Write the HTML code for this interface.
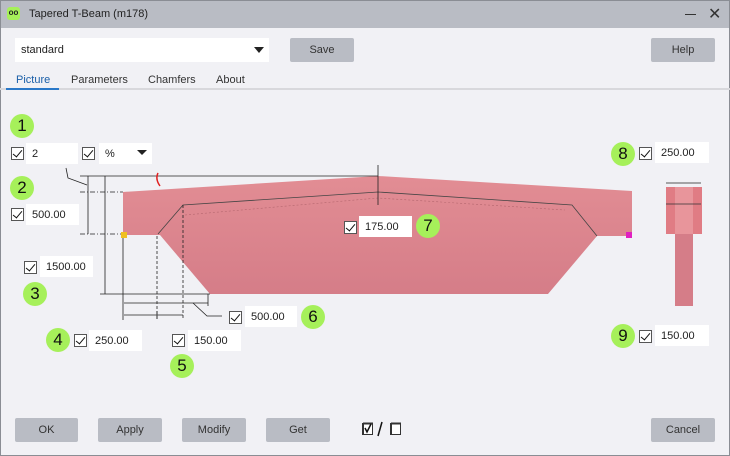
<!DOCTYPE html>
<html><head><meta charset="utf-8"><style>
*{margin:0;padding:0;box-sizing:border-box}
body{width:730px;height:456px;overflow:hidden;background:#f1f1f5;font-family:"Liberation Sans",sans-serif;font-size:11px;color:#222;position:relative}
.a{position:absolute}
.win{left:0;top:0;width:730px;height:456px;border:1px solid #8a8d94}
.title{left:1px;top:1px;width:728px;height:27px;background:#b9bcc4}
.inp{position:absolute;background:#fff;height:21px;padding:5px 0 0 6px;font-size:11px}
.cb{position:absolute;width:13px;height:13px;border:1px solid #555;background:#fff}
.cb:after{content:"";position:absolute;left:3px;top:0px;width:4px;height:8px;border:solid #111;border-width:0 1.7px 1.7px 0;transform:rotate(40deg)}
.btn{position:absolute;background:#b9bcc4;border-radius:2px;height:24px;text-align:center;line-height:24px;font-size:11px;color:#333}
.num{position:absolute;width:24px;height:24px;border-radius:50%;background:#a6f05a;text-align:center;line-height:24px;font-size:17px;color:#111}
.tab{position:absolute;top:74px;font-size:11px;color:#333}
</style></head><body>
<div class="a win"></div>
<div class="a title"></div>
<div class="a" style="left:7px;top:7px;width:13px;height:13px;background:#a6f05a;border-radius:3px;font-size:8px;line-height:12px;text-align:center;font-weight:bold">oo</div>
<div class="a" style="left:29px;top:8px;font-size:11px;color:#222">Tapered T-Beam (m178)</div>
<div class="a" style="left:685px;top:14px;width:11px;height:1px;background:#333"></div>
<div class="a" style="left:708px;top:4px;font-size:16px;color:#333">✕</div>

<div class="inp" style="left:15px;top:38px;width:254px;height:24px;padding-top:6px">standard</div>
<div class="a" style="left:254px;top:47px;border-left:5px solid transparent;border-right:5px solid transparent;border-top:6px solid #222"></div>
<div class="btn" style="left:290px;top:38px;width:64px">Save</div>
<div class="btn" style="left:651px;top:38px;width:64px">Help</div>

<div class="tab" style="left:16px;color:#1a5fa8">Picture</div>
<div class="tab" style="left:71px">Parameters</div>
<div class="tab" style="left:148px">Chamfers</div>
<div class="tab" style="left:216px">About</div>
<div class="a" style="left:0;top:88px;width:730px;height:2px;background:#d8d8dc"></div>
<div class="a" style="left:6px;top:88px;width:53px;height:2px;background:#2a78c8"></div>

<svg class="a" style="left:0;top:0" width="730" height="456">
<defs><linearGradient id="g" x1="0" y1="0" x2="0" y2="1"><stop offset="0" stop-color="#e28d94"/><stop offset="1" stop-color="#d57d88"/></linearGradient></defs>
<polygon points="123,192 378,176 632,191 632,236 597,236 548,294 210,294 160,235 123,235" fill="url(#g)"/>
<polyline points="158,234 183,205 378,192 572,205 597,236" fill="none" stroke="#444" stroke-width="0.8"/>
<polyline points="185,215 378,198 565,210" fill="none" stroke="#b5676f" stroke-width="0.6" stroke-dasharray="2,2"/>
<g stroke="#222" stroke-width="0.8" fill="none">
<line x1="80" y1="176" x2="378" y2="176"/>
<line x1="378" y1="165" x2="378" y2="205"/>
<line x1="88" y1="176" x2="88" y2="234"/>
<line x1="105" y1="176" x2="105" y2="294"/>
<line x1="80" y1="192" x2="123" y2="192" stroke-dasharray="5,2,1,2"/>
<line x1="80" y1="234" x2="123" y2="234" stroke-dasharray="5,2,1,2"/>
<line x1="100" y1="294" x2="210" y2="294"/>
<line x1="123" y1="236" x2="123" y2="320"/>
<line x1="157" y1="236" x2="157" y2="320" stroke-dasharray="3,2"/>
<line x1="183" y1="205" x2="183" y2="320" stroke-dasharray="3,2"/>
<line x1="208" y1="294" x2="208" y2="306"/>
<line x1="124" y1="303" x2="208" y2="303"/>
<line x1="124" y1="315" x2="183" y2="315"/>
<line x1="157" y1="311" x2="157" y2="319"/>
<polyline points="193,303 207,316 222,316"/>
<polyline points="66,168 68,178 87,185"/>
<line x1="666" y1="183" x2="701" y2="183"/>
</g>
<path d="M158,173 Q155,179 160,186" stroke="#e02020" stroke-width="1.5" fill="none"/>
<rect x="121" y="232" width="6" height="6" fill="#f0c020"/>
<rect x="626" y="232" width="6" height="6" fill="#e020c0"/>
<rect x="666" y="187" width="36" height="47" fill="#e07c84"/>
<rect x="675" y="187" width="18" height="47" fill="#e8959b"/>
<rect x="675" y="234" width="18" height="72" fill="#d57d88"/>
<line x1="666" y1="204" x2="701" y2="204" stroke="#333" stroke-width="0.8"/>
<rect x="362.5" y="423.5" width="10" height="11" fill="#fff" stroke="#333"/>
<line x1="363" y1="423.5" x2="373" y2="423.5" stroke="#333" stroke-width="2"/>
<line x1="363" y1="423" x2="363" y2="435" stroke="#333" stroke-width="2"/>
<polyline points="365,428 367,432 371,424" fill="none" stroke="#111" stroke-width="1.5"/>
<line x1="378" y1="436" x2="382" y2="422" stroke="#111" stroke-width="1.5"/>
<rect x="390.5" y="423.5" width="10" height="11" fill="#fff" stroke="#333"/>
<line x1="391" y1="423.5" x2="401" y2="423.5" stroke="#333" stroke-width="2"/>
<line x1="391" y1="423" x2="391" y2="435" stroke="#333" stroke-width="2"/>
</svg>

<div class="num" style="left:10px;top:114px">1</div>
<div class="num" style="left:10px;top:176px">2</div>
<div class="num" style="left:23px;top:282px">3</div>
<div class="num" style="left:46px;top:328px">4</div>
<div class="num" style="left:170px;top:354px">5</div>
<div class="num" style="left:301px;top:305px">6</div>
<div class="num" style="left:416px;top:214px">7</div>
<div class="num" style="left:611px;top:142px">8</div>
<div class="num" style="left:611px;top:324px">9</div>

<div class="cb" style="left:11px;top:147px"></div><div class="inp" style="left:26px;top:143px;width:52px">2</div>
<div class="cb" style="left:82px;top:147px"></div><div class="inp" style="left:99px;top:143px;width:53px">%</div>
<div class="a" style="left:137px;top:150px;border-left:5px solid transparent;border-right:5px solid transparent;border-top:5px solid #222"></div>
<div class="cb" style="left:11px;top:208px"></div><div class="inp" style="left:26px;top:204px;width:53px">500.00</div>
<div class="cb" style="left:24px;top:261px"></div><div class="inp" style="left:40px;top:256px;width:53px">1500.00</div>
<div class="cb" style="left:74px;top:334px"></div><div class="inp" style="left:89px;top:330px;width:53px">250.00</div>
<div class="cb" style="left:172px;top:334px"></div><div class="inp" style="left:188px;top:330px;width:53px">150.00</div>
<div class="cb" style="left:229px;top:311px"></div><div class="inp" style="left:245px;top:306px;width:52px">500.00</div>
<div class="cb" style="left:344px;top:221px"></div><div class="inp" style="left:359px;top:216px;width:53px">175.00</div>
<div class="cb" style="left:639px;top:147px"></div><div class="inp" style="left:655px;top:142px;width:54px">250.00</div>
<div class="cb" style="left:639px;top:330px"></div><div class="inp" style="left:655px;top:325px;width:54px">150.00</div>

<div class="btn" style="left:15px;top:418px;width:63px">OK</div>
<div class="btn" style="left:98px;top:418px;width:64px">Apply</div>
<div class="btn" style="left:182px;top:418px;width:64px">Modify</div>
<div class="btn" style="left:266px;top:418px;width:64px">Get</div>
<div class="btn" style="left:651px;top:418px;width:64px">Cancel</div>
</body></html>
